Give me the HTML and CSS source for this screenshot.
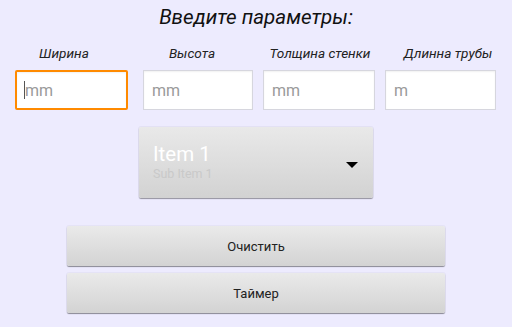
FILE: index.html
```html
<!DOCTYPE html>
<html lang="ru">
<head>
    <meta charset="UTF-8">
    <meta name="viewport" content="width=device-width, initial-scale=1.0">
    <title>Параметры трубы</title>
    <link rel="stylesheet" href="styles.css">
</head>
<body>
    <div class="screen">
        <h1 class="title">Введите параметры:</h1>

        <div class="labels">
            <span>Ширина</span>
            <span>Высота</span>
            <span>Толщина стенки</span>
            <span>Длинна трубы</span>
        </div>

        <div class="fields">
            <div class="field field-width focused"><span class="caret"></span><span class="hint">mm</span></div>
            <div class="field field-height"><span class="hint">mm</span></div>
            <div class="field field-wall"><span class="hint">mm</span></div>
            <div class="field field-length"><span class="hint">m</span></div>
        </div>

        <div class="spinner">
            <div class="spinner-text">
                <div class="item">Item 1</div>
                <div class="sub-item">Sub Item 1</div>
            </div>
            <span class="arrow"></span>
        </div>

        <div class="actions">
            <button type="button" class="btn">Очистить</button>
            <button type="button" class="btn">Таймер</button>
        </div>
    </div>
</body>
</html>
```

FILE: styles.css
```css
:root {
    --background-color: #EDEBFE;
    --text-primary: #1A1A1A;
    --hint-color: #9A9A9A;
    --focus-color: #FF8A00;
}

* {
    margin: 0;
    padding: 0;
    box-sizing: border-box;
}

body {
    font-family: Roboto, "Noto Sans", sans-serif;
    background-color: var(--background-color);
    color: var(--text-primary);
    width: 512px;
    height: 327px;
    overflow: hidden;
}

.screen {
    display: flex;
    flex-direction: column;
    align-items: center;
    padding-top: 4px;
}

.title {
    font-size: 20.6px;
    font-style: italic;
    font-weight: 400;
    line-height: 26px;
    color: #111;
}

.labels {
    width: 100%;
    display: grid;
    grid-template-columns: repeat(4, 1fr);
    margin-top: 15px;
    font-size: 13.6px;
    font-style: italic;
    line-height: 16px;
    text-align: center;
    color: #222;
}

.fields {
    width: 100%;
    display: flex;
    gap: 10px;
    padding-left: 15px;
    margin-top: 9px;
}

.field {
    height: 40px;
    background: #fff;
    border: 1px solid #D6D6DE;
    box-shadow: inset 0 1px 2px rgba(0, 0, 0, 0.06);
    display: flex;
    align-items: center;
    padding-left: 8px;
}

.field-width { width: 113px; margin-right: 5px; }
.field-height { width: 110px; }
.field-wall { width: 112px; }
.field-length { width: 111px; }

.field.focused {
    border: 2px solid var(--focus-color);
    border-radius: 2px;
    padding-left: 7px;
}

.hint {
    font-size: 16px;
    color: var(--hint-color);
}

.caret {
    width: 1px;
    height: 18px;
    background: #555;
}

.spinner {
    width: 234px;
    height: 71px;
    margin-top: 17px;
    background: linear-gradient(#E9E9E9, #D2D2D2);
    border-radius: 2px;
    box-shadow: 0 1px 1px rgba(0, 0, 0, 0.35), 0 0 0 1px rgba(0, 0, 0, 0.04);
    display: flex;
    align-items: center;
    padding: 0 15px 0 14px;
}

.spinner-text {
    flex: 1;
    margin-top: -2px;
}

.item {
    font-size: 20.5px;
    line-height: 24px;
    color: #fff;
}

.sub-item {
    font-size: 12.5px;
    line-height: 15px;
    color: #C9C9C9;
}

.arrow {
    width: 0;
    height: 0;
    border-left: 6px solid transparent;
    border-right: 6px solid transparent;
    border-top: 6px solid #000;
    margin-top: 4px;
}

.actions {
    display: flex;
    flex-direction: column;
    gap: 7px;
    margin-top: 28px;
}

.btn {
    width: 378px;
    height: 40px;
    border: none;
    border-radius: 2px;
    background: linear-gradient(#EAEAEA, #D3D3D3);
    box-shadow: 0 1px 1px rgba(0, 0, 0, 0.4), 0 0 0 1px rgba(0, 0, 0, 0.03);
    font-family: Roboto, "Noto Sans", sans-serif;
    font-size: 13px;
    color: #222;
    cursor: pointer;
}
```
